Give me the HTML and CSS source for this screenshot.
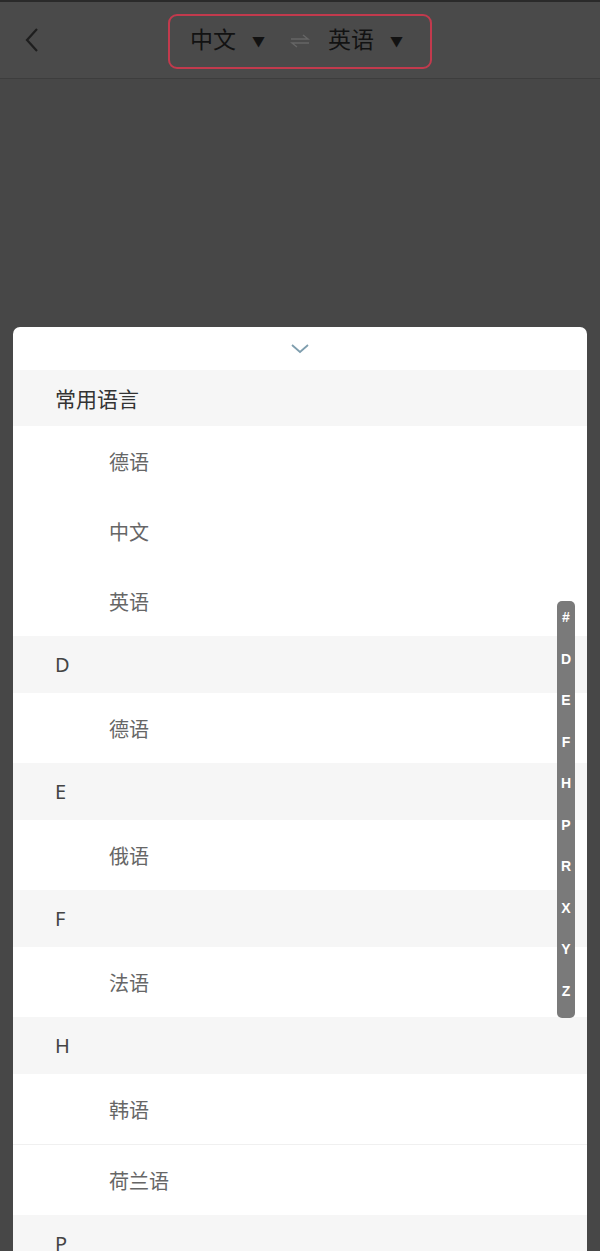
FILE: index.html
```html
<!DOCTYPE html>
<html lang="zh">
<head>
<meta charset="utf-8">
<link rel="stylesheet" href="styles.css">
</head>
<body>
<div class="page">
  <header class="topbar">
    <svg class="back" width="18" height="26" viewBox="0 0 18 26"><polyline points="14,2 4,13 14,24" fill="none" stroke="#1e1e1e" stroke-width="2.2"/></svg>
    <div class="switcher">
      <span class="lang">中文</span><span class="tri">▼</span>
      <svg class="swap" width="22" height="16" viewBox="0 0 22 16"><path d="M2 6 H19 L14 2 M20 10 H3 L8 14" fill="none" stroke="#666" stroke-width="1.4"/></svg>
      <span class="lang">英语</span><span class="tri">▼</span>
    </div>
  </header>
  <section class="sheet">
    <div class="handle"><svg width="20" height="12" viewBox="0 0 20 12"><polyline points="2,2 10,9 18,2" fill="none" stroke="#7f9eae" stroke-width="1.8"/></svg></div>
    <div class="group">常用语言</div>
    <div class="item">德语</div>
    <div class="item">中文</div>
    <div class="item">英语</div>
    <div class="group letter">D</div>
    <div class="item">德语</div>
    <div class="group letter">E</div>
    <div class="item">俄语</div>
    <div class="group letter">F</div>
    <div class="item">法语</div>
    <div class="group letter">H</div>
    <div class="item line">韩语</div>
    <div class="item">荷兰语</div>
    <div class="group letter">P</div>
  </section>
  <nav class="index">
    <span>#</span><span>D</span><span>E</span><span>F</span><span>H</span><span>P</span><span>R</span><span>X</span><span>Y</span><span>Z</span>
  </nav>
</div>
</body>
</html>
```

FILE: styles.css
```css
html, body {
  margin: 0;
  padding: 0;
  height: 100%;
  overflow: hidden;
}
body {
  background: #474747;
  font-family: "Noto Sans CJK SC", "Noto Sans", sans-serif;
}
.page {
  position: relative;
  height: 1251px;
  overflow: hidden;
}
.topbar {
  height: 76px;
  background: #4a4a4a;
  border-top: 2px solid #2a2a2a;
  border-bottom: 1px solid #3d3d3d;
  display: flex;
  align-items: center;
  position: relative;
}
.back {
  margin-left: 23px;
}
.switcher {
  position: absolute;
  left: 168px;
  top: 12px;
  width: 264px;
  height: 55px;
  border: 2px solid #c23a4d;
  border-radius: 9px;
  display: flex;
  align-items: center;
  padding: 0 0 6px 20px;
  box-sizing: border-box;
}
.lang {
  font-size: 23px;
  color: #121212;
  line-height: 1;
}
.tri {
  font-size: 13px;
  color: #121212;
  margin-left: 16px;
  margin-top: 4px;
}
.swap {
  margin: 4px 17px 0 24px;
}
.sheet {
  margin: 248px 13px 0;
  background: #fff;
  border-radius: 7px 7px 0 0;
  overflow: hidden;
}
.handle {
  height: 43px;
  display: flex;
  justify-content: center;
  align-items: center;
  padding-top: 1px;
  box-sizing: border-box;
}
.group {
  height: 56px;
  background: #f6f6f6;
  display: flex;
  align-items: center;
  padding-left: 42px;
  font-size: 21px;
  color: #333;
}
.group.letter {
  height: 57px;
  font-family: "Noto Sans", sans-serif;
  font-size: 20px;
  color: #444;
}
.item {
  height: 70px;
  display: flex;
  align-items: center;
  padding-left: 96px;
  font-size: 20px;
  color: #666;
}
.item.line {
  border-bottom: 1px solid #f0f0f0;
}
.index {
  position: absolute;
  left: 557px;
  top: 601px;
  width: 18px;
  height: 417px;
  background: #7a7a7a;
  border-radius: 5px;
  display: flex;
  flex-direction: column;
  justify-content: space-between;
  align-items: center;
  padding: 9px 0 20px;
  box-sizing: border-box;
}
.index span {
  color: #fff;
  font-family: "Liberation Sans", sans-serif;
  font-weight: bold;
  font-size: 14px;
  line-height: 1;
}
```
